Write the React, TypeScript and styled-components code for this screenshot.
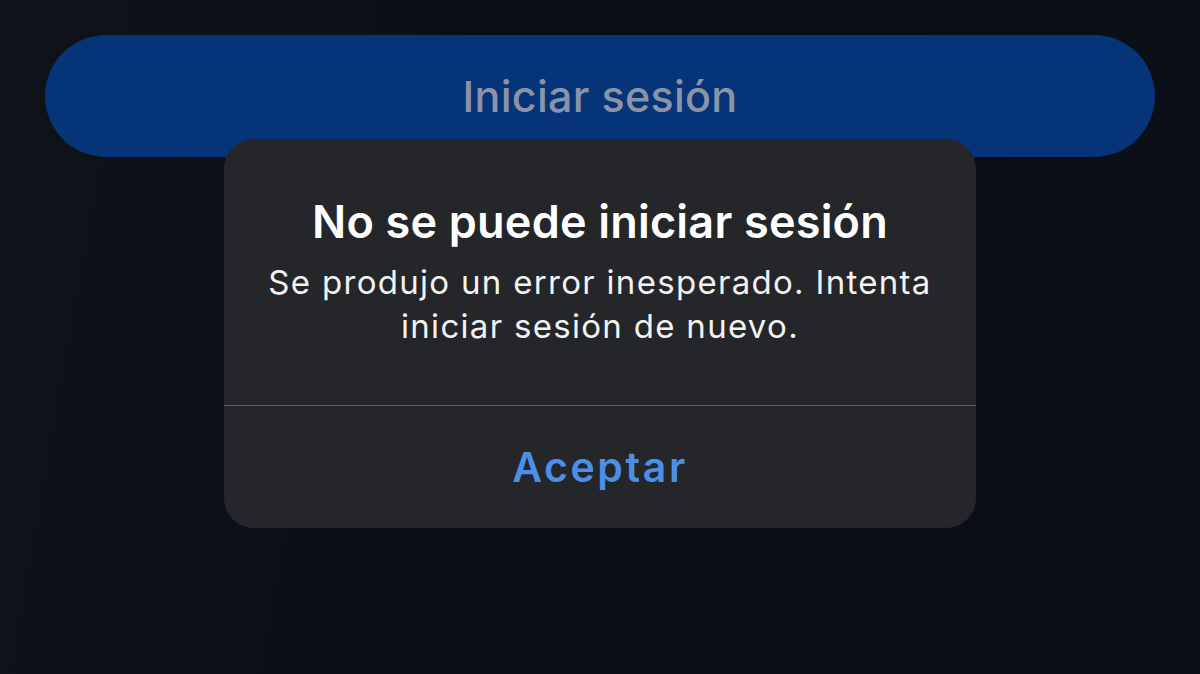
import styled, { createGlobalStyle } from 'styled-components';

const GlobalStyle = createGlobalStyle`
  html, body {
    margin: 0;
    padding: 0;
    background: #0b0e15;
  }
  body {
    font-family: Inter, "Noto Sans", "Liberation Sans", sans-serif;
    -webkit-font-smoothing: antialiased;
  }
`;

const Screen = styled.div`
  width: 1200px;
  height: 674px;
  overflow: hidden;
  display: flex;
  flex-direction: column;
  align-items: center;
  padding-top: 35px;
  box-sizing: border-box;
  background: linear-gradient(100deg, #10131a 0%, #0b0e17 40%, #0a0f18 100%);
`;

const LoginButton = styled.button`
  width: 1110px;
  height: 122px;
  border: 0;
  border-radius: 61px;
  background: #053479;
  color: #8b93a6;
  font-family: inherit;
  font-size: 43px;
  font-weight: 500;
  letter-spacing: 0.3px;
  display: flex;
  align-items: center;
  justify-content: center;
  padding-bottom: 2px;
`;

const Alert = styled.div`
  width: 752px;
  margin-top: -18px;
  border-radius: 30px;
  background: #252629;
  display: flex;
  flex-direction: column;
  overflow: hidden;
`;

const AlertBody = styled.div`
  height: 267px;
  box-sizing: border-box;
  padding-top: 52px;
  display: flex;
  flex-direction: column;
  align-items: center;
  text-align: center;
  border-bottom: 1px solid #5a5b5f;
`;

const Title = styled.h2`
  margin: 0;
  color: #ffffff;
  font-size: 45px;
  font-weight: 600;
  line-height: 62px;
  letter-spacing: 0.2px;
`;

const Message = styled.p`
  margin: 7px 0 0;
  color: #f2f2f3;
  font-size: 33px;
  font-weight: 400;
  line-height: 44px;
  letter-spacing: 1.3px;
`;

const Action = styled.button`
  height: 122px;
  border: 0;
  background: transparent;
  color: #4b8fe9;
  font-family: inherit;
  font-size: 41px;
  font-weight: 600;
  letter-spacing: 2.6px;
  display: flex;
  align-items: center;
  justify-content: center;
`;

export default function App() {
  return (
    <>
      <GlobalStyle />
      <Screen>
        <LoginButton>Iniciar sesión</LoginButton>
        <Alert>
          <AlertBody>
            <Title>No se puede iniciar sesión</Title>
            <Message>
              Se produjo un error inesperado. Intenta
              <br />
              iniciar sesión de nuevo.
            </Message>
          </AlertBody>
          <Action>Aceptar</Action>
        </Alert>
      </Screen>
    </>
  );
}
